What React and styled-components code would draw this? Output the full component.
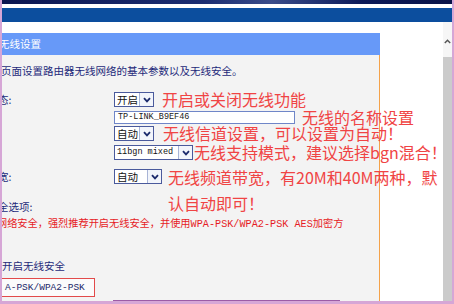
import React from 'react';
import styled, { createGlobalStyle } from 'styled-components';

const GlobalStyle = createGlobalStyle`
  html, body {
    margin: 0;
    padding: 0;
    background: #d6a6d6;
  }
  body {
    font-family: "Noto Sans CJK SC", sans-serif;
  }
`;

const Frame = styled.div`
  width: 454px;
  height: 304px;
  box-sizing: border-box;
  border-left: 2px solid #d6a6d6;
  border-right: 2px solid #d6a6d6;
  border-bottom: 3px solid #d6a6d6;
  background: #fff;
  overflow: hidden;
  display: flex;
  flex-direction: column;
`;

const TopStrip = styled.div`
  height: 4px;
  flex: none;
  background: linear-gradient(to right, #0b1650, #1c2e72 45%, #3a4c8a 60%, #0c1a58 80%, #0a1448);
`;

const BlueBar = styled.div`
  height: 14px;
  flex: none;
  margin-top: 4px;
  background: #0c4e9e;
`;

const Body = styled.div`
  flex: 1;
  min-height: 0;
  display: flex;
`;

const Main = styled.div`
  width: 378px;
  flex: none;
  display: flex;
  flex-direction: column;
`;

const Header = styled.div`
  height: 22px;
  margin-top: 11px;
  background: #6799f8;
  color: #fff;
  font-size: 10.5px;
  line-height: 22px;
  white-space: nowrap;
`;

const Content = styled.div`
  flex: 1;
  background: #f3f3f3;
  border-right: 1px solid #f4a24a;
  padding-top: 8px;
  display: flex;
  flex-direction: column;
`;

const Cut = styled.span`
  display: inline-block;
  margin-left: ${p => p.$shift || 0}px;
`;

const Desc = styled.div`
  font-size: 10.5px;
  line-height: 16px;
  color: #1e2a7a;
  white-space: nowrap;
`;

const Row = styled.div`
  display: flex;
  align-items: center;
  height: 15px;
  margin-top: ${p => p.$top}px;
`;

const Label = styled.div`
  width: 112px;
  flex: none;
  font-size: 10.5px;
  color: #1e2a7a;
  white-space: nowrap;
`;

const Select = styled.div`
  display: inline-flex;
  flex: none;
  width: ${p => p.$w}px;
  height: 15px;
  box-sizing: border-box;
  border: 1px solid #4a5a9c;
  background: #fff;
`;

const SelectValue = styled.span`
  flex: 1;
  padding-left: 2px;
  font-family: ${p => (p.$mono ? '"Liberation Mono", monospace' : '"Noto Sans CJK SC", sans-serif')};
  font-size: ${p => (p.$mono ? 8.5 : 10.5)}px;
  line-height: 13px;
  color: #111;
  white-space: nowrap;
  overflow: hidden;
`;

const SelectArrow = styled.span`
  width: 13px;
  flex: none;
  border-left: 1px solid #a8b4d6;
  background: #f2f5fb;
  display: flex;
  align-items: center;
  justify-content: center;
`;

const TextInput = styled.div`
  width: 181px;
  height: 13px;
  box-sizing: border-box;
  flex: none;
  border: 1px solid #6f86c8;
  background: #fff;
  padding-left: 3px;
  font-family: "Liberation Mono", monospace;
  font-size: 8.5px;
  line-height: 11px;
  color: #222;
`;

const Hint = styled.span`
  position: relative;
  z-index: 2;
  flex: none;
  margin-left: ${p => p.$gap}px;
  font-size: 16px;
  line-height: 15px;
  color: #f04444;
  white-space: nowrap;
`;

const WrapHint = styled(Hint)`
  align-self: flex-start;
  width: 280px;
  margin-top: -5px;
  line-height: 26px;
  white-space: normal;
`;

const Line = styled.div`
  margin-top: ${p => p.$top}px;
  font-size: 10.5px;
  line-height: 14px;
  color: #1e2a7a;
  white-space: nowrap;
`;

const Warning = styled(Line)`
  font-family: "Liberation Mono", "Noto Sans CJK SC", monospace;
  font-size: 10.2px;
  color: #e61c26;
`;

const ModeBox = styled.div`
  margin-top: 5px;
  margin-left: -10px;
  width: 103px;
  height: 19px;
  box-sizing: border-box;
  border: 1px solid #e24a4a;
  background: #fbfbfb;
  padding-left: 12px;
  font-family: "Liberation Mono", monospace;
  font-size: 9.5px;
  line-height: 17px;
  color: #1e2a6a;
`;

const BottomRule = styled.div`
  margin-top: 3px;
  margin-left: 111px;
  width: 227px;
  height: 1px;
  background: #9c5ca6;
`;

const RightPane = styled.div`
  width: 63px;
  flex: none;
  background: #fff;
`;

const Scrollbar = styled.div`
  width: 9px;
  flex: none;
  display: flex;
  flex-direction: column;
`;

const ScrollTop = styled.div`
  height: 35px;
  background: #f6f6f6;
  display: flex;
  justify-content: center;
  padding-top: 17px;
  box-sizing: border-box;
`;

const ScrollThumb = styled.div`
  flex: 1;
  background: #cbcbcb;
`;

const Chevron = () => (
  <svg width="8" height="6" viewBox="0 0 8 6">
    <path d="M1 1.2 L4 4.4 L7 1.2" fill="none" stroke="#1b2a6c" strokeWidth="1.8" />
  </svg>
);

const UpArrow = () => (
  <svg width="7" height="5" viewBox="0 0 7 5">
    <path d="M0.8 4 L3.5 1.2 L6.2 4" fill="none" stroke="#555" strokeWidth="1.4" />
  </svg>
);

const Dropdown = ({ w, value, mono }) => (
  <Select $w={w}>
    <SelectValue $mono={mono}>{value}</SelectValue>
    <SelectArrow><Chevron /></SelectArrow>
  </Select>
);

export default function App() {
  return (
    <>
      <GlobalStyle />
      <Frame>
        <TopStrip />
        <BlueBar />
        <Body>
          <Main>
            <Header><Cut $shift={-3}>无线设置</Cut></Header>
            <Content>
              <Desc><Cut $shift={-1}>页面设置路由器无线网络的基本参数以及无线安全。</Cut></Desc>

              <Row $top={13}>
                <Label><Cut $shift={-4}>态:</Cut></Label>
                <Dropdown w={40} value="开启" />
                <Hint $gap={8}>开启或关闭无线功能</Hint>
              </Row>
              <Row $top={3}>
                <Label />
                <TextInput>TP-LINK_B9EF46</TextInput>
                <Hint $gap={7}>无线的名称设置</Hint>
              </Row>
              <Row $top={1}>
                <Label />
                <Dropdown w={40} value="自动" />
                <Hint $gap={9}>无线信道设置，可以设置为自动！</Hint>
              </Row>
              <Row $top={4}>
                <Label />
                <Dropdown w={79} value="11bgn mixed" mono />
                <Hint $gap={1}>无线支持模式，建议选择bgn混合！</Hint>
              </Row>
              <Row $top={9}>
                <Label><Cut $shift={-4}>宽:</Cut></Label>
                <Dropdown w={48} value="自动" />
                <WrapHint $gap={6}>无线频道带宽，有20M和40M两种，默认自动即可！</WrapHint>
              </Row>

              <Line $top={16}><Cut $shift={-4}>全选项:</Cut></Line>
              <Warning $top={4}>
                <Cut $shift={-5}>网络安全，强烈推荐开启无线安全，并使用WPA-PSK/WPA2-PSK AES加密方</Cut>
              </Warning>
              <Line $top={27}>开启无线安全</Line>
              <ModeBox>A-PSK/WPA2-PSK</ModeBox>
              <BottomRule />
            </Content>
          </Main>
          <RightPane />
          <Scrollbar>
            <ScrollTop><UpArrow /></ScrollTop>
            <ScrollThumb />
          </Scrollbar>
        </Body>
      </Frame>
    </>
  );
}
